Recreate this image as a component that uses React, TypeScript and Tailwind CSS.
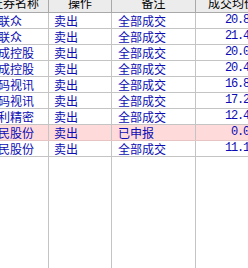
import React from "react"

type Row = { name: string; op: string; note: string; price: string; pending?: boolean }

const rows: Row[] = [
  { name: "联众", op: "卖出", note: "全部成交", price: "20.850" },
  { name: "联众", op: "卖出", note: "全部成交", price: "21.400" },
  { name: "成控股", op: "卖出", note: "全部成交", price: "20.030" },
  { name: "成控股", op: "卖出", note: "全部成交", price: "20.400" },
  { name: "码视讯", op: "卖出", note: "全部成交", price: "16.830" },
  { name: "码视讯", op: "卖出", note: "全部成交", price: "17.200" },
  { name: "利精密", op: "卖出", note: "全部成交", price: "12.400" },
  { name: "民股份", op: "卖出", note: "已申报", price: "0.000", pending: true },
  { name: "民股份", op: "卖出", note: "全部成交", price: "11.150" },
]

const cjk = "font-['Noto_Sans_CJK_SC','Noto_Sans_CJK_JP',sans-serif] text-[12px]"

export default function App() {
  return (
    <div className={`flex h-[268px] w-[248px] flex-col overflow-hidden bg-white ${cjk}`}>
      {/* header, scrolled so its top is cut */}
      <div className="flex h-[13px] shrink-0 border-b border-[#a9a9a9] bg-[#ececec] leading-[12px] text-black">
        <div className="w-[49px] shrink-0 overflow-hidden whitespace-nowrap border-r border-[#a9a9a9]">
          <span className="relative -top-[3px] ml-[-9px] block">证券名称</span>
        </div>
        <div className="w-[63px] shrink-0 overflow-hidden whitespace-nowrap border-r border-[#a9a9a9] text-center">
          <span className="relative -top-[3px] block">操作</span>
        </div>
        <div className="w-[84px] shrink-0 overflow-hidden whitespace-nowrap border-r border-[#a9a9a9] text-center">
          <span className="relative -top-[3px] block">备注</span>
        </div>
        <div className="w-[72px] shrink-0 overflow-hidden whitespace-nowrap text-center">
          <span className="relative -top-[3px] block">成交均价</span>
        </div>
      </div>

      {rows.map((r, i) => (
        <div
          key={i}
          className={`flex h-4 shrink-0 border-b leading-[15px] text-[#0c0cb4] ${
            r.pending ? "border-[#e6c4c4] bg-[#ffdada]" : "border-[#c4c4c4] bg-white"
          }`}
        >
          <div className="w-[49px] shrink-0 overflow-hidden whitespace-nowrap border-r border-[#c4c4c4]">
            <span className="ml-[-2px] block">{r.name}</span>
          </div>
          <div className="w-[63px] shrink-0 overflow-hidden whitespace-nowrap border-r border-[#c4c4c4] pl-[5px]">
            {r.op}
          </div>
          <div className="w-[84px] shrink-0 overflow-hidden whitespace-nowrap border-r border-[#c4c4c4] pl-[6px]">
            {r.note}
          </div>
          <div className="w-[72px] shrink-0 overflow-hidden whitespace-nowrap pr-[7px] text-right font-['Liberation_Mono',monospace] tracking-[-1.2px]">
            {r.price}
          </div>
        </div>
      ))}

      {/* empty space below, grid lines keep going */}
      <div className="flex flex-1">
        <div className="w-[49px] shrink-0 border-r border-[#c4c4c4]" />
        <div className="w-[63px] shrink-0 border-r border-[#c4c4c4]" />
        <div className="w-[84px] shrink-0 border-r border-[#c4c4c4]" />
        <div className="w-[72px] shrink-0" />
      </div>
    </div>
  )
}
